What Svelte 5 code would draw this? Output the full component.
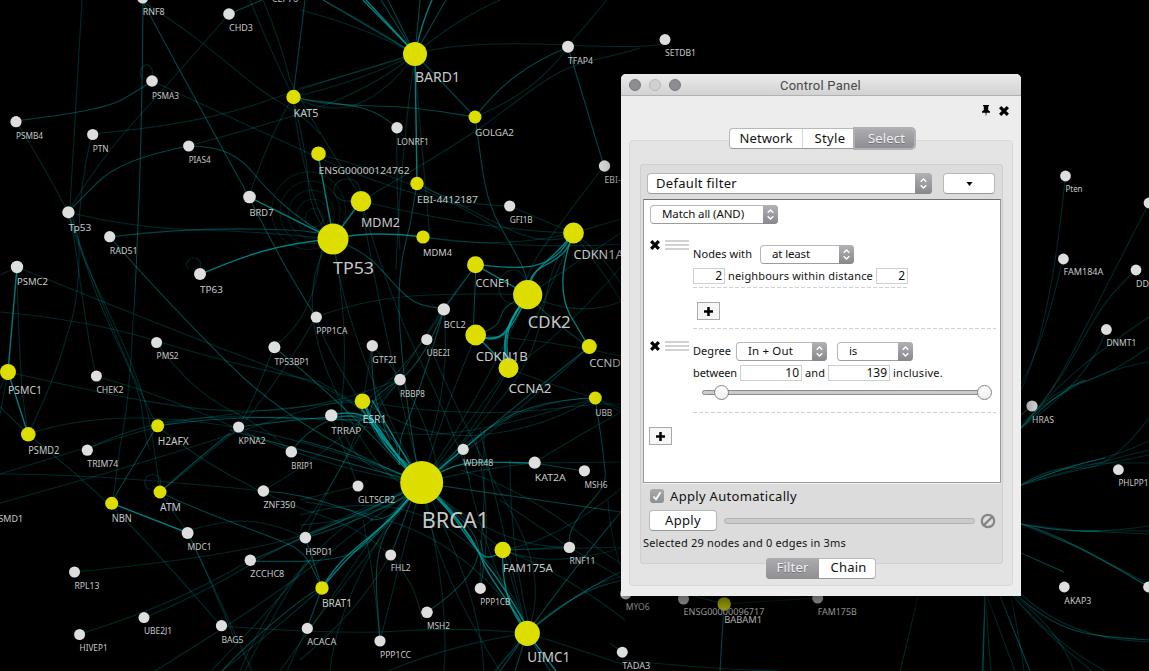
<script>
  // name, centre x, centre y, radius, font size, baseline, label width
  const hits = [
    ['BARD1', 415, 54, 12, 13.7, 82.5, 45],
    ['KAT5', 293.5, 97, 7.2, 10, 117, 25],
    ['GOLGA2', 475, 117, 6.5, 9.5, 136, 39],
    ['ENSG00000124762', 318.5, 153.7, 7.3, 9.5, 174, 91],
    ['EBI-4412187', 417, 183.5, 6.7, 9.5, 203, 61],
    ['MDM2', 361, 201.3, 10.3, 12.5, 227, 39],
    ['TP53', 333, 239, 15.5, 17, 274.5, 41],
    ['MDM4', 423, 237, 6.6, 9.7, 256.5, 29],
    ['CDKN1A', 573.5, 233, 10.4, 12.5, 259, 50],
    ['CCNE1', 475.5, 264.7, 8.5, 11.3, 287, 35],
    ['CDK2', 527.7, 294.7, 14.6, 16.5, 328, 43],
    ['CDKN1B', 475.7, 335, 10.4, 12.5, 361, 52],
    ['CCND1', 589.3, 346.5, 7.5, 10.5, 367.5, 38],
    ['CCNA2', 508.5, 368, 10, 12.5, 393.5, 43],
    ['UBB', 595.3, 398, 6.5, 9.5, 416.5, 17],
    ['ESR1', 362.5, 401.3, 7.8, 10.7, 423, 24],
    ['PSMC1', 8, 372, 8, 11, 394, 34],
    ['PSMD2', 28.3, 434.3, 7.3, 10.3, 454.5, 31],
    ['H2AFX', 157.7, 425.8, 6.5, 10, 445, 31],
    ['ATM', 160, 492, 6.5, 10, 511, 21],
    ['NBN', 111.7, 503.3, 6.5, 10, 522, 20],
    ['BRCA1', 421.7, 482.6, 21.5, 21.5, 528, 67.5],
    ['FAM175A', 502.7, 550, 8.2, 11.2, 572, 50],
    ['BRAT1', 322, 588, 6.7, 10, 607, 30],
    ['UIMC1', 527.3, 633.3, 12.6, 13.7, 662.5, 43],
    ['BABAM1', 724.2, 604, 6.7, 9.7, 623.5, 38]
  ];
  const others = [
    ['CEP76', 272, -16, 5.5, 9, 2.5, 26],
    ['RNF8', 142.7, -2, 5.5, 9, 15, 22],
    ['CHD3', 229, 14, 5.8, 9, 31, 24],
    ['PSMA3', 152, 81, 5.8, 9, 99, 27],
    ['PSMB4', 16, 121.7, 5.6, 8.7, 139, 27],
    ['PTN', 92.7, 134.5, 5.6, 9, 152, 16],
    ['PIAS4', 188.7, 146, 5.6, 8.7, 163.5, 22],
    ['BRD7', 249.5, 197, 6.3, 9.5, 216, 24],
    ['Tp53', 68.4, 212.3, 6.1, 9.7, 231, 23],
    ['RAD51', 109.7, 236.7, 5.6, 8.8, 254, 28],
    ['TP63', 200, 274, 6, 9.5, 293, 23],
    ['PSMC2', 17, 267, 6.2, 9.5, 285.5, 31],
    ['PMS2', 156.6, 342.5, 5.5, 8.7, 359.5, 22],
    ['TP53BP1', 274.4, 347.3, 6, 8.8, 365, 35],
    ['CHEK2', 96.4, 376, 5.5, 8.7, 393, 27],
    ['PPP1CA', 316.3, 317.2, 5.6, 8.7, 334.5, 31],
    ['GTF2I', 372.3, 345.7, 5.7, 8.7, 363, 24],
    ['UBE2I', 426.8, 339.5, 5.6, 8.7, 356.5, 23],
    ['BCL2', 443.8, 309.4, 6.2, 9.5, 328, 22],
    ['RBBP8', 400, 379.6, 5.8, 8.7, 397, 25],
    ['TRRAP', 331.3, 415.4, 6.2, 9.5, 434, 30],
    ['KPNA2', 238.6, 427, 5.6, 8.7, 444.5, 27],
    ['BRIP1', 291.3, 451.8, 5.8, 8.7, 469, 22],
    ['TRIM74', 87.3, 450.2, 5.6, 8.7, 467, 31],
    ['ZNF350', 263.4, 491, 5.8, 8.7, 508.5, 32],
    ['PSMD1', -7, 505, 6, 9, 522, 30],
    ['MDC1', 187.6, 533, 6, 9, 550.5, 24],
    ['HSPD1', 305.4, 537.6, 5.8, 8.8, 555, 27],
    ['ZCCHC8', 250.3, 560.3, 5.7, 8.7, 577.5, 34],
    ['RPL13', 74.5, 572, 5.5, 8.7, 589, 25],
    ['UBE2J1', 144, 617.6, 5.5, 8.7, 634.5, 28],
    ['HIVEP1', 79.6, 634.5, 5.5, 8.7, 651.5, 28],
    ['BAG5', 221.5, 625.7, 5.6, 8.7, 643, 22],
    ['ACACA', 307.3, 628.4, 5.6, 8.7, 645, 29],
    ['GLTSCR2', 358, 486, 5.5, 8.7, 503, 37],
    ['FHL2', 390.7, 555, 5.5, 8.7, 571.5, 20],
    ['MSH2', 427, 612.3, 5.8, 8.7, 629.5, 23],
    ['PPP1CC', 380, 641, 5.6, 8.7, 658, 31],
    ['PPP1CB', 480.3, 588.4, 5.6, 8.7, 605.5, 30],
    ['WDR48', 463.2, 449.4, 5.6, 8.7, 466.5, 30],
    ['KAT2A', 534.7, 462.7, 6.1, 9.3, 481, 31],
    ['MSH6', 584.4, 470.8, 5.6, 8.7, 488, 23],
    ['RNF11', 569.4, 547.4, 5.7, 8.7, 564.5, 26],
    ['LONRF1', 397, 127.8, 5.7, 8.7, 145, 32],
    ['GFI1B', 509.7, 206, 5.6, 8.7, 223, 23],
    ['TFAP4', 568, 46.8, 6, 8.8, 64, 25],
    ['SETDB1', 665, 39.6, 5.5, 8.7, 56.5, 31],
    ['EBI-3926', 604.5, 166, 5.7, 8.7, 183.5, 36],
    ['MYO6', 625.7, 593.7, 5.7, 8.7, 610.5, 24],
    ['TADA3', 622.3, 652.2, 5.5, 8.7, 669, 28],
    ['ENSG00000096717', 683.5, 599, 5.5, 8.7, 615.5, 81],
    ['FAM175B', 817.7, 598, 5.5, 8.7, 615, 39],
    ['Pten', 1065.5, 176, 5.4, 8.7, 192.5, 17],
    ['', 1149, 203, 5.4, 8.7, 220, 0],
    ['FAM184A', 1063.4, 259, 5.4, 8.7, 275.5, 40],
    ['DDX1', 1136, 270, 5.4, 8.7, 287, 23],
    ['DNMT1', 1106.4, 329.5, 5.4, 8.7, 346.5, 30],
    ['HRAS', 1032, 406, 5.6, 8.7, 423, 22],
    ['PHLPP1', 1118.4, 469.7, 5.4, 8.7, 486.5, 30],
    ['AKAP3', 1064.3, 587, 5.4, 8.7, 604, 27],
    ['', 1148.5, 587, 5.4, 8.7, 600, 0]
  ];

  const faint = [
    'M82,0L70,206', 'M143,2C190,30 235,70 257,87S300,110 320,134', 'M229,14Q170,82 133,123T68,212',
    'M152,81Q240,122 317,157T470,207', 'M92,134Q200,124 260,103T415,54', 'M188,146C240,132 300,115 330,103S390,75 415,54',
    'M16,121Q44,166 68,212C80,260 110,310 130,360S150,420 160,490', 'M92,134Q78,190 79,245T67,335Q55,380 28,434',
    'M68,212Q130,228 200,230T333,239', 'M250,0Q268,45 293,97', 'M263,0Q280,40 290,80Q320,135 350,180T361,201',
    'M293,97Q267,140 249,197', 'M293,97Q300,170 325,225', 'M293,97Q306,150 308,180T325,230',
    'M142,78A6,8 0 1 1 152,76', 'M188,269A7,7 0 1 1 200,268', 'M150,490A8,8 0 1 1 160,486',
    'M133,320Q130,400 120,447L113,500',
    'M72,215C90,290 112,330 130,370S140,430 150,450', 'M70,215C80,270 85,330 96,376', 'M68,212Q110,330 157,426',
    'M17,267Q110,305 200,340T320,385Q390,420 422,483', 'M17,267Q18,330 22,390L28,434', 'M0,312Q90,320 160,342T320,382Q390,420 422,483',
    'M17,267L0,275', 'M8,372C90,390 170,410 240,411S360,395 400,379', 'M8,372L0,415', 'M8,372L-6,401L28,434',
    'M157,343Q190,390 230,410T291,452', 'M96,376Q170,397 240,430Q330,470 422,483', 'M28,434Q100,410 200,422T422,483',
    'M87,450Q150,415 240,417T360,420', 'M0,474Q120,437 160,426T363,401', 'M0,503Q150,462 250,428T363,401',
    'M0,474Q100,474 263,491', 'M28,434C60,460 95,490 125,520S190,590 221,626', 'M157,426Q230,485 320,515T422,620',
    'M274,347Q250,410 238,427', 'M316,317Q280,380 240,427Q200,460 160,492', 'M274,347Q310,320 318,270T333,239',
    'M300,10Q360,25 415,54', 'M323,0Q370,25 415,54', 'M415,54Q455,20 500,0', 'M415,54Q460,40 568,45T665,39',
    'M568,46L607,0', 'M568,46Q540,90 475,117', 'M415,54Q390,90 360,103T293,97', 'M415,54Q360,82 293,97',
    'M415,54Q350,75 300,88', 'M361,201Q440,155 480,128C520,100 535,85 560,72S610,58 640,48',
    'M604,166Q570,210 545,245T528,295', 'M397,128Q396,190 400,250', 'M415,54Q400,160 396,270', 'M415,66L430,240',
    'M417,183Q450,205 510,206', 'M417,183Q450,200 500,225T573,233', 'M510,206L573,233', 'M361,201Q480,230 573,233',
    'M423,237Q500,250 573,233', 'M423,237Q530,250 625,244', 'M361,201Q390,300 420,360T470,480', 'M318,154Q420,180 500,230',
    'M330,240Q290,300 340,400T422,483', 'M333,239Q350,330 342,400T422,483', 'M361,201Q380,320 422,483', 'M333,239Q345,340 422,483',
    'M316,317Q370,297 430,295T528,295', 'M316,317Q330,360 380,430T422,483', 'M372,346Q410,380 430,440T422,483',
    'M444,309Q450,380 430,440', 'M427,340Q470,440 510,510T527,633', 'M444,309Q400,380 363,401',
    'M476,265Q440,310 410,360T363,401', 'M476,335Q550,340 621,356', 'M528,295Q580,320 625,300', 'M573,233L625,218',
    'M573,233Q600,250 625,290', 'M573,233Q610,280 626,310', 'M528,295Q580,260 625,230', 'M508,368Q550,350 625,262',
    'M508,368Q550,385 595,398L625,410', 'M528,295Q480,400 422,483', 'M573,233Q540,320 490,400T422,483',
    'M573,233C530,290 560,330 500,400S450,460 422,483', 'M508,368Q450,450 422,483Q380,540 310,628', 'M476,335Q440,420 422,483Q400,560 380,641',
    'M589,347Q500,430 422,483', 'M363,401Q420,440 480,435T595,398', 'M363,401Q460,420 560,408T625,420', 'M331,415Q390,440 450,433T595,398',
    'M400,380Q350,440 305,538', 'M400,380Q350,440 263,491', 'M363,401Q360,450 300,530', 'M331,415L358,486', 'M372,346L363,401',
    'M534,463L625,462', 'M463,449L422,483', 'M422,483Q500,400 595,398', 'M422,483Q470,470 534,463Q570,440 625,410',
    'M305,538Q260,515 220,523T188,533', 'M74,572Q200,560 270,544T422,483', 'M144,618Q200,595 250,565T422,483',
    'M80,634Q180,603 250,560', 'M188,533Q220,600 252,671', 'M160,492L188,533Q215,590 235,640', 'M221,626Q340,635 400,631T527,633',
    'M155,671Q270,600 320,560T422,483', 'M211,671Q280,600 310,560T422,483', 'M240,671Q270,600 310,560', 'M245,671Q270,620 307,560',
    'M222,671Q280,625 322,588', 'M287,671L307,628', 'M300,660Q360,610 390,555', 'M330,671Q335,620 370,555T422,483',
    'M363,520Q375,580 380,641', 'M280,671Q310,630 350,570T422,483', 'M422,483Q450,600 444,671', 'M422,483Q480,590 484,671',
    'M422,483Q430,560 500,671', 'M388,671Q450,645 527,633', 'M422,483Q500,550 569,547', 'M503,550L569,547', 'M503,550L625,547',
    'M503,550Q560,570 625,620', 'M503,550Q560,540 625,485', 'M422,483Q490,540 503,550L527,633', 'M305,502Q400,515 450,550T527,633',
    'M300,515Q390,490 450,530T527,633', 'M300,525Q380,520 422,483', 'M358,486L300,500', 'M463,449Q480,550 527,633',
    'M484,430V500Q480,560 480,588', 'M476,440Q490,500 485,560', 'M510,460Q510,550 530,630', 'M527,633L480,430',
    'M460,470Q530,490 600,550L625,566', 'M625,580L569,547L500,500', 'M527,633Q580,650 625,665', 'M595,398L625,414',
    'M608,500Q610,540 625,580', 'M503,550C540,565 580,560 622,548', 'M527,633C580,590 600,580 625,576',
    'M1065,180Q1050,330 1021,390', 'M1062,262Q1045,340 1021,384', 'M1149,203L1080,338Q1050,400 1021,428',
    'M1136,270C1080,320 1090,350 1021,428', 'M1106,330Q1090,380 1021,428', 'M1149,317C1100,350 1060,380 1021,428',
    'M1149,347Q1110,375 1080,383T1021,428', 'M1149,362Q1100,370 1060,395T1021,428', 'M1149,418Q1110,470 1080,468T1021,485',
    'M1149,441Q1120,455 1080,464T1021,485', 'M1149,450Q1090,464 1021,485', 'M1149,455Q1080,468 1021,485', 'M1149,463H1110Q1070,463 1021,485',
    'M1149,526Q1110,532 1080,531T1021,524', 'M1149,531H1080L1021,524', 'M1149,534L1080,531', 'M1149,587Q1070,540 1021,524',
    'M1149,584L1080,548L1021,524', 'M1021,594Q1070,640 1149,642', 'M1010,592Q1050,640 1105,671', 'M1010,592Q1040,630 1092,671',
    'M1010,592Q1060,630 1074,671', 'M1010,592Q1020,640 1024,671', 'M985,596L982,671', 'M985,596L991,671',
    'M987,596L1015,671', 'M918,596Q908,640 900,671', 'M724,604L817,598', 'M622,652L610,643', 'M622,660Q720,670 780,671'
  ];
  const mid = [
    'M143,2Q142,130 138,225T133,320', 'M143,2Q190,90 249,197C275,250 295,285 316,317', 'M229,14L262,0', 'M188,146C145,155 115,165 98,182S80,200 68,212',
    'M188,146C225,146 240,157 255,175S290,215 333,239', 'M16,121C60,115 105,110 125,98S145,86 152,81', 'M110,237Q180,228 255,229T333,239',
    'M110,237Q160,295 230,365T422,483', 'M293,97L305,0', 'M415,54L323,0', 'M415,54L381,0', 'M415,54L388,0', 'M415,54L420,0', 'M415,54L446,0',
    'M415,54L475,117', 'M475,117C500,85 525,65 568,47', 'M568,47L604,166', 'M293,97C330,107 370,105 400,107S455,114 475,117',
    'M293,97C340,107 365,99 397,128', 'M475,117C482,160 482,190 497,220S530,270 528,295', 'M417,183L410,225C400,260 397,290 400,330S407,410 417,465',
    'M333,239C375,255 380,270 400,290S430,305 444,309', 'M476,265L473,335', 'M444,309L476,265', 'M444,309Q430,360 410,415C398,440 400,445 399,465',
    'M528,295Q550,320 589,347', 'M528,295C480,315 520,320 476,335', 'M589,347Q510,410 463,450L422,483', 'M595,398Q520,400 480,435T422,483',
    'M595,398Q602,440 605,470C608,490 590,500 580,515S569,535 569,547', 'M372,346Q370,400 390,440', 'M400,380Q340,410 400,460',
    'M157,426L111,503', 'M238,427Q330,415 363,416T400,465', 'M157,426Q230,415 300,418T363,420', 'M291,452Q310,425 340,417T400,460',
    'M300,440Q360,455 422,483', 'M274,347Q340,400 400,465', 'M230,430Q300,450 422,483', 'M160,492Q190,465 230,433',
    'M160,492C200,513 270,535 290,545S312,570 322,588', 'M263,491Q300,493 340,507T370,520Q395,520 410,495', 'M305,538Q350,525 410,495',
    'M250,561Q310,535 410,490', 'M250,561C300,562 330,562 350,554S395,515 412,495', 'M322,588C310,590 250,640 222,671',
    'M322,588L307,628', 'M322,588Q310,550 305,538', 'M391,555L415,490', 'M400,510C375,540 375,570 377,600L380,641', 'M427,612C460,590 475,570 478,555S470,525 440,500',
    'M480,588Q487,560 480,540', 'M422,483L621,512', 'M534,463L584,471', 'M527,633Q580,560 625,507', 'M527,633Q580,590 625,570', 'M527,633Q575,588 625,580',
    'M527,633L495,671', 'M527,633L500,671', 'M527,633L515,671', 'M527,633L550,671', 'M683,593L724,604', 'M724,604L720,671',
    'M1032,406L1021,415', 'M1021,428Q1060,390 1085,380', 'M1021,485Q1070,465 1105,458', 'M1021,524Q1060,532 1100,531', 'M1021,524Q1060,533 1149,587',
    'M1021,553L1064,572', 'M1005,585C1060,635 1080,635 1149,640', 'M985,596L983,671', 'M1000,596L1030,671', 'M444,309Q425,360 400,380', 'M422,483L463,449L480,435'
  ];
  const bright = [
    'M363,0L412,50', 'M366,0L414,52', 'M432,0Q422,22 416,50', 'M415,54L417,183', 'M318,154L331,225', 'M361,201L333,239', 'M249,197L333,239',
    'M200,274C235,261 265,245 333,239', 'M333,239Q370,230 423,237', 'M17,267L8,372', 'M8,372L28,434', 'M111,503L188,533',
    'M573,233C550,265 530,265 528,295', 'M570,237C550,280 500,265 476,265', 'M575,233C560,275 528,255 528,295', 'M573,233C560,270 560,295 570,315L589,347', 'M476,265L528,295',
    'M528,295C515,320 505,350 476,335', 'M528,295C505,325 510,345 476,336', 'M528,295C500,330 505,340 507,368', 'M524,300C495,340 508,350 504,368', 'M528,295C507,320 503,340 510,368',
    'M476,335L508,368', 'M363,401Q380,450 422,483', 'M366,406Q385,450 415,470', 'M361,408Q382,440 410,470', 'M331,415Q365,407 380,430T408,470', 'M372,400L410,465',
    'M422,483C460,458 470,462 534,463', 'M422,483C460,520 475,540 482,560S510,600 527,633', 'M424,483C465,520 475,550 487,565S515,605 530,633',
    'M422,483C475,530 475,575 503,550', 'M503,550Q500,600 527,633', 'M422,483C380,540 350,540 322,588', 'M418,487C370,545 365,535 322,588', 'M527,633L556,671'
  ];

  // Tightens or widens letter spacing until the label has the given width.
  function fit(node, width) {
    node.style.letterSpacing = '0';
    const natural = node.getBoundingClientRect().width;
    const gap = (width - natural) / node.textContent.length;
    node.style.letterSpacing = gap + 'px';
  }
</script>

{#snippet arrows()}
  <span class="arrows"><svg width="9" height="13" viewBox="0 0 9 13"><path d="M1.7 4.8 4.5 2 7.3 4.8M1.7 8.2 4.5 11 7.3 8.2" /></svg></span>
{/snippet}
{#snippet cross()}
  <svg class="cross" width="10" height="10" viewBox="0 0 10 10"><path d="M1.200 1.200 8.800 8.800M8.800 1.200 1.200 8.800" /></svg>
{/snippet}
{#snippet plus()}
  <button class="plus" aria-label="Add"><svg width="9" height="9" viewBox="0 0 9 9"><path d="M4.5 0V9M0 4.5H9" /></svg></button>
{/snippet}

<main>
  <svg class="graph" width="1149" height="671" viewBox="0 0 1149 671">
    <g class="edges">
      {#each faint as d}<path {d} opacity=".25" />{/each}
      {#each mid as d}<path {d} opacity=".43" />{/each}
      {#each bright as d}<path {d} opacity=".75" stroke-width="1.4" />{/each}
      {#each [9, 16, 23, 30, 37] as r}<ellipse cx={316 - r * 0.2} cy={220 - r * 0.25} rx={r} ry={r * 1.05} opacity=".17" />{/each}
      <ellipse cx="347" cy="190" rx="13" ry="11" opacity=".25" />
      <ellipse cx="513" cy="287" rx="14" ry="17" opacity=".25" />
    </g>
    {#each others as [, x, y, r]}<circle cx={x} cy={y} {r} fill="#dedede" />{/each}
    {#each hits as [, x, y, r]}<circle cx={x} cy={y} {r} fill="#dddd00" />{/each}
    {#each [...others, ...hits] as [name, x, , , size, base, width]}
      {#if name}<text {x} y={base - 0.3} font-size={size} textLength={width} lengthAdjust="spacingAndGlyphs">{name}</text>{/if}
    {/each}
  </svg>

  <section class="window">
    <header>
      <i class="light"></i><i class="light off"></i><i class="light"></i>
      <h1><span use:fit={81}>Control Panel</span></h1>
    </header>
    <div class="dock">
      <svg width="10" height="12" viewBox="0 0 10 12"><path d="M2 0H8V1.3H7.2V5L9 6.5V7.7H5.6L5 11.5 4.4 7.7H1V6.5L2.8 5V1.3H2Z" /></svg>
      {@render cross()}
    </div>
    <nav class="tabs">
      <span class="tab network"><b use:fit={53}>Network</b></span>
      <span class="tab style"><b use:fit={31}>Style</b></span>
      <span class="tab active ring"><b use:fit={37}>Select</b></span>
    </nav>

    <div class="outer">
      <div class="inner">
        <div class="top">
          <div class="combo big"><b use:fit={81}>Default filter</b>{@render arrows()}</div>
          <button class="menu" aria-label="Options"><svg width="7" height="4" viewBox="0 0 7 4"><path d="M.5 0H6.500L3.500 4Z" /></svg></button>
        </div>
        <div class="list">
          <div class="combo match"><b use:fit={82}>Match all (AND)</b>{@render arrows()}</div>
          <div class="rule first">
            {@render cross()}<i class="grip"></i>
            <div class="body">
              <div class="line"><b class="lead" use:fit={59}>Nodes with</b><div class="combo least"><b use:fit={38}>at least</b>{@render arrows()}</div></div>
              <div class="line fields"><span class="field">2</span><b use:fit={145}>neighbours within distance</b><span class="field">2</span></div>
              <i class="dash short"></i>
              {@render plus()}
            </div>
          </div>
          <div class="rule second">
            {@render cross()}<i class="grip"></i>
            <div class="body">
              <i class="dash lead-dash"></i>
              <div class="line"><b class="lead" use:fit={38}>Degree</b><div class="combo inout"><b use:fit={45}>In + Out</b>{@render arrows()}</div><div class="combo is"><b use:fit={8}>is</b>{@render arrows()}</div></div>
              <div class="line fields"><b use:fit={44}>between</b><span class="field wide">10</span><b use:fit={20}>and</b><span class="field wide">139</span><b use:fit={50}>inclusive.</b></div>
              <div class="slider"><i class="knob"></i><i class="knob"></i></div>
              <i class="dash"></i>
            </div>
          </div>
          {@render plus()}
        </div>
        <label class="auto"><span class="check"><svg width="10" height="10" viewBox="0 0 10 10"><path d="M1.5 5.500 4 8.300 8.500 1.200" /></svg></span><b use:fit={127}>Apply Automatically</b></label>
        <div class="run">
          <button class="apply"><b use:fit={36}>Apply</b></button>
          <i class="progress"></i>
          <svg width="16" height="16" viewBox="0 0 16 16"><circle cx="8" cy="8" r="6.200" /><path d="M12.400 3.600 3.600 12.400" /></svg>
        </div>
        <p><b use:fit={203}>Selected 29 nodes and 0 edges in 3ms</b></p>
      </div>
      <nav class="tabs bottom">
        <span class="tab active filter"><b use:fit={32}>Filter</b></span>
        <span class="tab chain"><b use:fit={36}>Chain</b></span>
      </nav>
    </div>
  </section>
</main>

<style>
  :global(body) { background: #000; overflow: hidden; }
  main, main * { box-sizing: border-box; }
  main { position: relative; width: 1149px; height: 671px; overflow: hidden; background: #000; font: 13px/16px "Noto Sans", "Open Sans", sans-serif; color: #111; }
  b { font-weight: 400; white-space: nowrap; display: inline-block; flex: none; }
  i { display: block; flex: none; }
  button { padding: 0; font: inherit; color: inherit; }
  .graph { display: block; }
  .edges { fill: none; stroke: #00a3a3; stroke-width: 1.1; }
  .graph text { fill: #c8c8c8; }

  .window { position: absolute; left: 621px; top: 74px; width: 400px; height: 522px; padding: 0 8px; background: #ededed; border-radius: 5px 5px 0 0; box-shadow: 0 12px 24px 2px rgba(0, 0, 0, .62); }
  header { margin: 0 -8px; height: 22px; padding-left: 8px; display: flex; align-items: center; gap: 8px; border-radius: 5px 5px 0 0; background: linear-gradient(#ebebeb, #d2d2d2); border-bottom: 1px solid #b1b1b1; }
  .light { width: 12px; height: 12px; border-radius: 50%; background: #8e8e92; border: 1px solid #77777b; }
  .off { background: #d0d0d0; border-color: #bababa; }
  h1 { flex: 1; margin: 0; padding: 2px 0 0 91px; font: 13px/20px Roboto, sans-serif; color: #484848; display: flex; }
  .dock { height: 30px; margin-bottom: 2px; padding-right: 4px; display: flex; justify-content: flex-end; align-items: center; gap: 8px; }
  .cross { flex: none; fill: none; stroke: #000; stroke-width: 3.300; }

  .tabs { position: relative; z-index: 1; display: flex; height: 21px; width: 186px; margin-left: 100px; border: 1px solid #b9b9b9; border-bottom-color: #999; border-radius: 4px; background: #fff; }
  .tab { display: flex; align-items: center; justify-content: center; padding-bottom: 2px; }
  .network { width: 73px; border-right: 1px solid #d9d9d9; }
  .style { width: 52px; padding-left: 2px; }
  .active { color: #f2f2f2; background: linear-gradient(#acacb0, #8e8e93); text-shadow: 0 1px 0 #737377; }
  .ring { flex: 1; border-radius: 0 3px 3px 0; box-shadow: 0 0 0 2px #b0b0b5; padding-left: 4px; }

  .outer { margin-top: -9px; height: 446px; width: 384px; padding: 23px 10px 0; border: 1px solid #d8d8d8; border-radius: 4px; background: #e4e4e4; }
  .inner { width: 363px; height: 400px; padding: 8px 2px 0; border: 1px solid #cfcfcf; border-radius: 3px; background: #dcdcdc; }
  .top { display: flex; gap: 11px; padding-left: 4px; height: 26px; }
  .combo { display: flex; align-items: center; justify-content: space-between; height: 19px; padding-left: 11px; border: 1px solid #b7b7b7; border-bottom-color: #9d9d9d; border-radius: 4px; background: #fff; font-size: 11.500px; }
  .combo b { margin-top: -2px; }
  .big { width: 285px; height: 21px; padding-left: 8px; font-size: 13px; }
  .arrows { display: flex; align-items: center; justify-content: center; width: 15px; height: calc(100% + 2px); margin: -1px -1px -1px 0; border-radius: 0 4px 4px 0; background: linear-gradient(#b2b2b6, #87878c); }
  .big .arrows { width: 17px; }
  .arrows svg { fill: none; stroke: #fff; stroke-width: 1.400; }
  .menu, .apply { display: flex; align-items: center; justify-content: center; height: 21px; border: 1px solid #b9b9b9; border-bottom-color: #999; border-radius: 4px; background: #fff; }
  .menu { width: 52px; }

  .list { width: 358px; height: 284px; padding: 5px 4px 0 5px; border: 1px solid #999; border-top-color: #707070; background: #fff; box-shadow: 0 1px 0 #f4f4f4; font-size: 11px; }
  .match { width: 128px; margin-left: 1px; }
  .rule { display: flex; }
  .first { margin-top: 16px; height: 101px; }
  .second { height: 86px; }
  .rule > .cross { margin: 0 5px 0 1px; }
  .grip { width: 24px; height: 10px; margin-right: 4px; background: repeating-linear-gradient(#d2d2d2 0 2px, #fff 2px 4px); }
  .body { width: 303px; }
  .line { display: flex; align-items: center; height: 19px; }
  .lead { margin-top: -1px; }
  .first .line:first-child { margin-top: 5px; }
  .least { width: 94px; margin-left: 8px; }
  .line.fields { height: 16px; gap: 3px; margin-top: 4px; }
  .field { width: 32px; height: 16px; padding-right: 2px; border: 1px solid #cfcfcf; text-align: right; line-height: 14px; font-size: 12px; }
  .wide { width: 62px; }
  .dash { height: 1px; background: repeating-linear-gradient(90deg, #d0d0d0 0 4px, transparent 4px 6px); }
  .short { width: 214px; margin-top: 3px; }
  .plus { display: flex; align-items: center; justify-content: center; width: 23px; height: 18px; border: 1px solid #a9a9a9; background: #f6f6f6; }
  .plus svg { fill: none; stroke: #000; stroke-width: 2.500; }
  .body .plus { margin: 14px 0 0 4px; }
  .list > .plus { margin: 0; }
  .lead-dash { margin-top: -13px; margin-bottom: 13px; }
  .inout { width: 91px; margin-left: 5px; }
  .is { width: 76px; margin-left: 10px; }
  .slider { display: flex; justify-content: space-between; align-items: center; width: 284px; height: 5px; margin: 9px 0 17px 9px; padding-left: 11px; border: 1px solid #8b8b8b; border-radius: 3px; background: #cbcbcb; }
  .knob { width: 15px; height: 15px; border: 1px solid #858585; border-radius: 50%; background: linear-gradient(#fff, #eee); }
  .knob:last-child { margin-right: -7px; }

  .auto { display: flex; align-items: center; gap: 6px; height: 14px; margin: 6px 0 0 7px; }
  .check { display: flex; align-items: center; justify-content: center; width: 14px; height: 14px; border-radius: 3px; background: linear-gradient(#a9a9ad, #8d8d92); }
  .check svg { fill: none; stroke: #fff; stroke-width: 1.700; }
  .run { display: flex; align-items: center; height: 21px; margin: 7px 0 0 6px; }
  .run > svg { margin-left: 5px; fill: none; stroke: #858585; stroke-width: 2.200; }
  .apply { width: 68px; padding-bottom: 1px; }
  .progress { width: 251px; height: 6px; margin-left: 7px; border: 1px solid #b2b2b2; border-radius: 3px; background: #cbcbcb; }
  p { margin: 4px 0 0; font-size: 11px; }
  .bottom { width: 110px; margin: -6px 0 0 126px; }
  .filter { width: 53px; margin: -1px 0 -1px -1px; padding-bottom: 3px; border-radius: 4px 0 0 4px; }
  .chain { flex: 1; padding-left: 3px; padding-bottom: 3px; }
</style>
